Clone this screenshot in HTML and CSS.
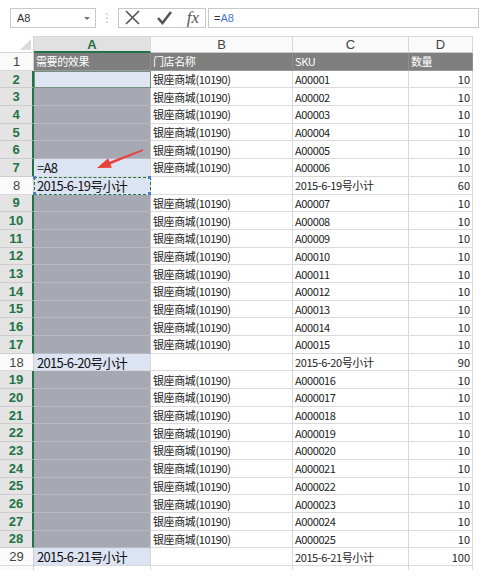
FILE: index.html
```html
<!DOCTYPE html>
<html>
<head>
<meta charset="utf-8">
<link rel="stylesheet" href="styles.css">
</head>
<body>
<div class="page">
  <div class="fbar">
    <div class="namebox"><span class="nb-text">A8</span><span class="nb-arrow"></span></div>
    <div class="dots">⋮</div>
    <div class="btns">
      <svg class="ico" width="20" height="18" viewBox="0 0 20 18"><path d="M3 2 L16 15 M16 2 L3 15" stroke="#555" stroke-width="1.6" fill="none"/></svg>
      <svg class="ico" width="20" height="18" viewBox="0 0 20 18"><path d="M3 9 L7.5 14 L16 3" stroke="#555" stroke-width="2.6" fill="none"/></svg>
      <span class="fx">fx</span>
    </div>
    <div class="finput"><span class="eq">=</span><span class="ref">A8</span></div>
  </div>
  <div class="sheet">
    <div class="grid">
      <div class="corner"><span class="tri"></span></div>
      <div class="ch selc">A</div><div class="ch">B</div><div class="ch">C</div><div class="ch">D</div>

      <div class="rh">1</div><div class="c hd">需要的效果</div><div class="c hd">门店名称</div><div class="c hd">SKU</div><div class="c hd">数量</div>

      <div class="rh sel">2</div><div class="c a act"></div><div class="c">银座商城(10190)</div><div class="c">A00001</div><div class="c n">10</div>
      <div class="rh sel">3</div><div class="c a g"></div><div class="c">银座商城(10190)</div><div class="c">A00002</div><div class="c n">10</div>
      <div class="rh sel">4</div><div class="c a g"></div><div class="c">银座商城(10190)</div><div class="c">A00003</div><div class="c n">10</div>
      <div class="rh sel">5</div><div class="c a g"></div><div class="c">银座商城(10190)</div><div class="c">A00004</div><div class="c n">10</div>
      <div class="rh sel">6</div><div class="c a g"></div><div class="c">银座商城(10190)</div><div class="c">A00005</div><div class="c n">10</div>
      <div class="rh sel">7</div><div class="c a lt big">=A8</div><div class="c">银座商城(10190)</div><div class="c">A00006</div><div class="c n">10</div>
      <div class="rh">8</div><div class="c a lt big ants"><span class="h h1"></span><span class="h h2"></span><span class="h h3"></span><span class="h h4"></span>2015-6-19号小计</div><div class="c"></div><div class="c">2015-6-19号小计</div><div class="c n">60</div>
      <div class="rh sel">9</div><div class="c a g"></div><div class="c">银座商城(10190)</div><div class="c">A00007</div><div class="c n">10</div>
      <div class="rh sel">10</div><div class="c a g"></div><div class="c">银座商城(10190)</div><div class="c">A00008</div><div class="c n">10</div>
      <div class="rh sel">11</div><div class="c a g"></div><div class="c">银座商城(10190)</div><div class="c">A00009</div><div class="c n">10</div>
      <div class="rh sel">12</div><div class="c a g"></div><div class="c">银座商城(10190)</div><div class="c">A00010</div><div class="c n">10</div>
      <div class="rh sel">13</div><div class="c a g"></div><div class="c">银座商城(10190)</div><div class="c">A00011</div><div class="c n">10</div>
      <div class="rh sel">14</div><div class="c a g"></div><div class="c">银座商城(10190)</div><div class="c">A00012</div><div class="c n">10</div>
      <div class="rh sel">15</div><div class="c a g"></div><div class="c">银座商城(10190)</div><div class="c">A00013</div><div class="c n">10</div>
      <div class="rh sel">16</div><div class="c a g"></div><div class="c">银座商城(10190)</div><div class="c">A00014</div><div class="c n">10</div>
      <div class="rh sel">17</div><div class="c a g"></div><div class="c">银座商城(10190)</div><div class="c">A00015</div><div class="c n">10</div>
      <div class="rh">18</div><div class="c a lt big">2015-6-20号小计</div><div class="c"></div><div class="c">2015-6-20号小计</div><div class="c n">90</div>
      <div class="rh sel">19</div><div class="c a g"></div><div class="c">银座商城(10190)</div><div class="c">A000016</div><div class="c n">10</div>
      <div class="rh sel">20</div><div class="c a g"></div><div class="c">银座商城(10190)</div><div class="c">A000017</div><div class="c n">10</div>
      <div class="rh sel">21</div><div class="c a g"></div><div class="c">银座商城(10190)</div><div class="c">A000018</div><div class="c n">10</div>
      <div class="rh sel">22</div><div class="c a g"></div><div class="c">银座商城(10190)</div><div class="c">A000019</div><div class="c n">10</div>
      <div class="rh sel">23</div><div class="c a g"></div><div class="c">银座商城(10190)</div><div class="c">A000020</div><div class="c n">10</div>
      <div class="rh sel">24</div><div class="c a g"></div><div class="c">银座商城(10190)</div><div class="c">A000021</div><div class="c n">10</div>
      <div class="rh sel">25</div><div class="c a g"></div><div class="c">银座商城(10190)</div><div class="c">A000022</div><div class="c n">10</div>
      <div class="rh sel">26</div><div class="c a g"></div><div class="c">银座商城(10190)</div><div class="c">A000023</div><div class="c n">10</div>
      <div class="rh sel">27</div><div class="c a g"></div><div class="c">银座商城(10190)</div><div class="c">A000024</div><div class="c n">10</div>
      <div class="rh sel">28</div><div class="c a g"></div><div class="c">银座商城(10190)</div><div class="c">A000025</div><div class="c n">10</div>
      <div class="rh">29</div><div class="c a lt big">2015-6-21号小计</div><div class="c"></div><div class="c">2015-6-21号小计</div><div class="c n">100</div>
      <div class="rh stub"></div><div class="c stub"></div><div class="c stub"></div><div class="c stub"></div><div class="c stub"></div>
    </div>
    <svg class="arrow" width="501" height="577" viewBox="0 0 501 577"><polygon points="97,168 108.2,158.2 109.5,161.7 142.8,149.3 143.3,150.7 110.5,164.3 111.8,167.8" fill="#e8413a"/></svg>
  </div>
</div>
</body>
</html>
```
FILE: styles.css
```css
html, body { margin: 0; padding: 0; background: #fff; }
body { font-family: "Noto Sans CJK SC", "Noto Sans", sans-serif; width: 501px; height: 577px; overflow: hidden; }
.page { position: relative; width: 501px; height: 577px; }

.fbar { height: 36px; display: flex; align-items: flex-start; padding-top: 8px; box-sizing: border-box; }
.namebox { margin-left: 10px; width: 86px; height: 20px; box-sizing: border-box; border: 1px solid #c8c8c8; display: flex; align-items: center; justify-content: space-between; padding: 0 5px 0 6px; }
.nb-text { font-family: "Liberation Sans", sans-serif; font-size: 11px; color: #333; }
.nb-arrow { width: 0; height: 0; border-left: 3px solid transparent; border-right: 3px solid transparent; border-top: 3px solid #777; }
.dots { width: 22px; text-align: center; color: #b0b0b0; font-family: "DejaVu Sans", sans-serif; font-size: 12px; line-height: 20px; }
.btns { width: 88px; height: 20px; box-sizing: border-box; border: 1px solid #c8c8c8; display: flex; align-items: center; justify-content: space-between; padding: 0 6px 0 4px; }
.ico { display: block; }
.fx { font-family: "Liberation Serif", serif; font-style: italic; font-size: 17px; color: #555; line-height: 18px; }
.finput { margin-left: 2px; width: 271px; height: 20px; box-sizing: border-box; border: 1px solid #c8c8c8; padding-left: 5px; font-family: "Liberation Sans", sans-serif; font-size: 11px; line-height: 18px; }
.eq { color: #333; }
.ref { color: #4a78d0; }

.sheet { position: relative; }
.grid { display: grid; grid-template-columns: 34px 117px 142px 116px 64px; grid-template-rows: 17px repeat(29, 17.7px) 4px; width: 473px; }
.corner { background: #fff; border-right: 1px solid #d4d4d4; border-bottom: 1px solid #d4d4d4; box-sizing: border-box; position: relative; }
.tri { position: absolute; right: 2px; bottom: 2px; width: 0; height: 0; border-left: 11px solid transparent; border-bottom: 11px solid #dcdcdc; }
.ch { box-sizing: border-box; border-top: 1px solid #d8d8d8; border-right: 1px solid #d8d8d8; border-bottom: 1px solid #c8c8c8; background: #fafafa; color: #444; font-family: "Liberation Sans", sans-serif; font-size: 13px; display: flex; align-items: center; justify-content: center; }
.ch.selc { background: #e1e1e1; color: #217346; font-weight: bold; border-bottom: 2px solid #217346; }

.rh { box-sizing: border-box; border-bottom: 1px solid #dadada; border-right: 1px solid #cfcfcf; background: #fafafa; color: #444; font-family: "Liberation Sans", sans-serif; font-size: 13px; display: flex; align-items: center; justify-content: center; }
.rh.sel { background: #e4e4e4; color: #217346; font-weight: bold; border-right: 2px solid #217346; border-bottom-color: #cdcdcd; }

.c { box-sizing: border-box; border-right: 1px solid #dadada; border-bottom: 1px solid #dadada; font-size: 11px; letter-spacing: -0.4px; color: #222; display: flex; align-items: center; padding: 0 2px; white-space: nowrap; overflow: visible; background: #fff; }
.c.hd { background: #7f7f7f; color: #fff; border-right-color: #8e8e8e; border-bottom-color: #9a9a9a; }
.c.n { justify-content: flex-end; letter-spacing: 0; }
.c.a.g { background: #a6a9b2; border-bottom-color: #b7bac2; border-right-color: #c6c8ce; }
.c.a.lt { background: #dce3f2; }
.c.a.act { background: #dfe5f2; border: 1px solid #73907f; }
.c.big { font-size: 13px; letter-spacing: -0.7px; color: #111; padding-left: 3px; }
.c.ants { position: relative; outline: 1px dashed #217346; outline-offset: -1px; border-bottom-color: transparent; }
.h { position: absolute; width: 3px; height: 3px; background: #4d7fc9; }
.h1 { left: -1px; top: -1px; }
.h2 { right: -1px; top: -1px; }
.h3 { left: -1px; bottom: -1px; }
.h4 { right: -1px; bottom: -1px; }
.stub { border-bottom: none; background: #fff; }
.rh.stub { background: #fafafa; }

.arrow { position: absolute; left: 0; top: -36px; pointer-events: none; }
```
